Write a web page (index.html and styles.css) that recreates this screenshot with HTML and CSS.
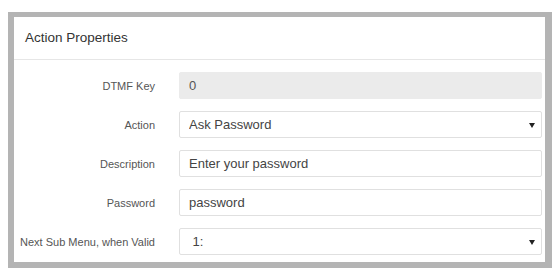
FILE: index.html
```html
<!DOCTYPE html>
<html lang="en">
<head>
  <meta charset="UTF-8" />
  <title>Action Properties</title>
  <link rel="stylesheet" href="styles.css">
</head>
<body>
  <div class="panel">
    <div class="panel-header">Action Properties</div>

    <form class="panel-body">
      <div class="row">
        <label for="dtmfKey">DTMF Key</label>
        <input type="text" id="dtmfKey" value="0" disabled />
      </div>

      <div class="row">
        <label for="action">Action</label>
        <div class="select-wrap">
          <select id="action">
            <option>Ask Password</option>
          </select>
        </div>
      </div>

      <div class="row">
        <label for="description">Description</label>
        <input type="text" id="description" value="Enter your password" />
      </div>

      <div class="row">
        <label for="password">Password</label>
        <input type="text" id="password" value="password" />
      </div>

      <div class="row">
        <label for="nextMenu">Next Sub Menu, when Valid</label>
        <div class="select-wrap">
          <select id="nextMenu">
            <option>&nbsp;1:</option>
          </select>
        </div>
      </div>
    </form>
  </div>
</body>
</html>
```

FILE: styles.css
```css
body {
  margin: 0;
  background-color: #fff;
  font-family: "Liberation Sans", Arial, sans-serif;
}

.panel {
  margin: 12px 8px 9px 8px;
  border-style: solid;
  border-color: #b4b4b4;
  border-width: 5px 7px 6px 6px;
  background-color: #fff;
}

.panel-header {
  height: 42px;
  line-height: 42px;
  padding-left: 11px;
  font-size: 13.5px;
  color: #333;
  border-bottom: 1px solid #e6e6e6;
}

.panel-body {
  margin: 0;
  padding: 12px 3px 7px 0;
  display: flex;
  flex-direction: column;
  gap: 12px;
}

.row {
  display: flex;
  align-items: center;
  gap: 24px;
}

label {
  width: 141px;
  flex-shrink: 0;
  text-align: right;
  font-size: 11px;
  color: #555;
}

input[type="text"],
select {
  box-sizing: border-box;
  width: 100%;
  height: 27px;
  margin: 0;
  padding: 0 9px;
  border: 1px solid #e0e0e0;
  border-radius: 2px;
  background-color: #fff;
  font-family: "Liberation Sans", Arial, sans-serif;
  font-size: 13px;
  color: #444;
  outline: none;
}

input[type="text"] {
  flex: 1;
}

input:disabled {
  background-color: #ebebeb;
  border-color: #ebebeb;
  color: #555;
}

.select-wrap {
  flex: 1;
  position: relative;
}

.select-wrap select {
  appearance: none;
  -webkit-appearance: none;
}

.select-wrap::after {
  content: "";
  position: absolute;
  right: 7px;
  top: 12px;
  border-left: 3px solid transparent;
  border-right: 3px solid transparent;
  border-top: 5px solid #222;
  pointer-events: none;
}
```
